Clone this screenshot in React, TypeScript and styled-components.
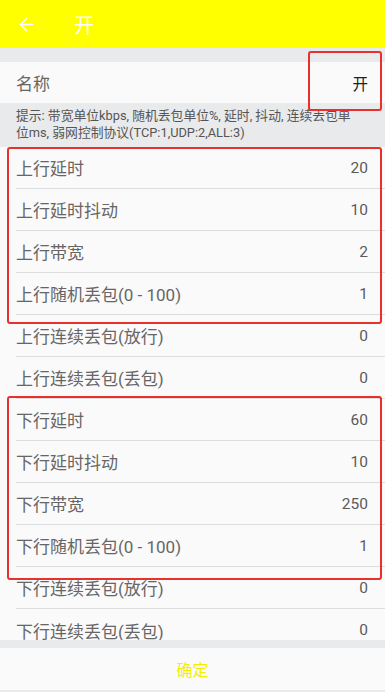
import { createGlobalStyle } from "styled-components";
import styled from "styled-components";
import { ArrowLeft } from "lucide-react";

const GlobalStyle = createGlobalStyle`
  html, body {
    margin: 0;
    padding: 0;
    background: #e9eaec;
  }
  * {
    box-sizing: border-box;
  }
`;

const Page = styled.div`
  position: relative;
  width: 385px;
  height: 692px;
  display: flex;
  flex-direction: column;
  background: #e9eaec;
  font-family: Roboto, "Noto Sans CJK SC", sans-serif;
  overflow: hidden;
`;

const Header = styled.div`
  height: 48px;
  flex-shrink: 0;
  background: #ffff00;
  display: flex;
  align-items: center;
  padding-left: 16px;
  color: #fff;
`;

const Title = styled.div`
  font-size: 20px;
  margin-left: 37px;
  color: #fff;
`;

const Scroll = styled.div`
  flex: 1;
  overflow: hidden;
  padding-top: 14px;
`;

const NameRow = styled.div`
  height: 41px;
  display: flex;
  align-items: center;
  justify-content: space-between;
  padding: 0 17px 0 16px;
  background: #fafafa;
`;

const Hint = styled.div`
  padding: 4px 24px 0 16px;
  height: 44px;
  font-size: 12.8px;
  line-height: 17px;
  color: #555;
`;

const List = styled.div`
  background: #fafafa;
`;

const Row = styled.div<{ $last?: boolean }>`
  height: 42px;
  margin-left: 16px;
  padding-right: 17px;
  display: flex;
  align-items: center;
  justify-content: space-between;
  border-bottom: ${(p) => (p.$last ? "none" : "1px solid #dddddd")};
`;

const Label = styled.span`
  font-size: 17px;
  color: #666;
`;

const Value = styled.span<{ $dark?: boolean }>`
  font-size: 15.5px;
  color: ${(p) => (p.$dark ? "#222" : "#5a5a5a")};
`;

const Footer = styled.div`
  flex-shrink: 0;
  height: 52px;
  padding: 8px 0 2px;
  background: #e9eaec;
`;

const Confirm = styled.div`
  height: 42px;
  background: #fafafa;
  display: flex;
  align-items: center;
  justify-content: center;
  font-size: 16px;
  color: #f2ef00;
`;

const Mark = styled.div`
  position: absolute;
  border: 2px solid #e8312c;
  border-radius: 3px;
  pointer-events: none;
`;

const rows: [string, string][] = [
  ["上行延时", "20"],
  ["上行延时抖动", "10"],
  ["上行带宽", "2"],
  ["上行随机丢包(0 - 100)", "1"],
  ["上行连续丢包(放行)", "0"],
  ["上行连续丢包(丢包)", "0"],
  ["下行延时", "60"],
  ["下行延时抖动", "10"],
  ["下行带宽", "250"],
  ["下行随机丢包(0 - 100)", "1"],
  ["下行连续丢包(放行)", "0"],
  ["下行连续丢包(丢包)", "0"],
];

const marks = [
  { left: 308, top: 51, width: 74, height: 60 },
  { left: 7, top: 147, width: 375, height: 177 },
  { left: 7, top: 396, width: 375, height: 184 },
];

export default function App() {
  return (
    <Page>
      <GlobalStyle />
      <Header>
        <ArrowLeft size={21} strokeWidth={1.8} color="#fff" />
        <Title>开</Title>
      </Header>
      <Scroll>
        <NameRow>
          <Label>名称</Label>
          <Value $dark>开</Value>
        </NameRow>
        <Hint>
          提示: 带宽单位kbps, 随机丢包单位%, 延时, 抖动, 连续丢包单位ms, 弱网控制协议(TCP:1,UDP:2,ALL:3)
        </Hint>
        <List>
          {rows.map(([label, value], i) => (
            <Row key={label} $last={i === rows.length - 1}>
              <Label>{label}</Label>
              <Value>{value}</Value>
            </Row>
          ))}
        </List>
      </Scroll>
      <Footer>
        <Confirm>确定</Confirm>
      </Footer>
      {marks.map((m, i) => (
        <Mark
          key={i}
          style={{ left: m.left, top: m.top, width: m.width, height: m.height }}
        />
      ))}
    </Page>
  );
}
